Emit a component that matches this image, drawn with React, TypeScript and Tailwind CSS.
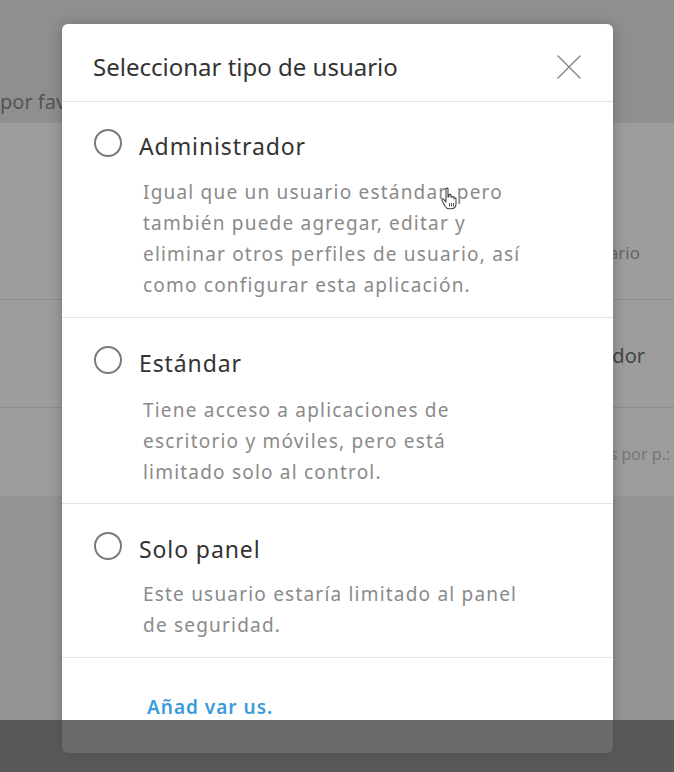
const options = [
  {
    title: "Administrador",
    desc: [
      "Igual que un usuario estándar, pero",
      "también puede agregar, editar y",
      "eliminar otros perfiles de usuario, así",
      "como configurar esta aplicación.",
    ],
    pad: "pt-[27px] pb-[16px]",
    gap: "mt-[20px]",
  },
  {
    title: "Estándar",
    desc: [
      "Tiene acceso a aplicaciones de",
      "escritorio y móviles, pero está",
      "limitado solo al control.",
    ],
    pad: "pt-[28px] pb-[15px]",
    gap: "mt-[21px]",
  },
  {
    title: "Solo panel",
    desc: ["Este usuario estaría limitado al panel", "de seguridad."],
    pad: "pt-[28px] pb-[16px]",
    gap: "mt-[19px]",
  },
];

function Radio() {
  return <span className="block h-[28px] w-[28px] shrink-0 rounded-full border-2 border-[#7a7a7a]" />;
}

function CloseIcon() {
  return (
    <svg width="24" height="24" viewBox="0 0 24 24" fill="none" stroke="#8a8a8a" strokeWidth="1.5" strokeLinecap="round">
      <path d="M1 1l22 22M23 1L1 23" />
    </svg>
  );
}

function HandCursor() {
  return (
    <svg width="22" height="26" viewBox="0 0 22 26" className="absolute left-[440px] top-[186px]">
      <path
        d="M6 3c0-1.2 2-1.2 2 0v8l1-0.2V9c0-1 2-1 2 0v2l1 0.2c0-1 2-1 2 0v1.5c0-1 2-1 2 0v5c0 3-2 5-5 5h-2c-2 0-3-1-4-2.5L2 14.5c-0.7-1 0.7-2.2 1.7-1.2L6 16z"
        fill="#fff"
        stroke="#444"
        strokeWidth="1.1"
        strokeLinejoin="round"
      />
      <path d="M9.5 17v3.5M11.5 17v3.5M13.5 17v3.5" stroke="#555" strokeWidth="1" />
    </svg>
  );
}

export default function App() {
  return (
    <div className="relative h-[772px] w-[674px] overflow-hidden bg-[#959595] font-['Noto_Sans',sans-serif]">
      {/* page behind the dialog */}
      <div className="flex h-[123px] items-end whitespace-nowrap bg-[#8f8f8f] pb-[6px]">
        <span className="text-[20px] text-[#555]">por favor</span>
      </div>
      <div className="flex flex-col bg-[#9d9d9d]">
        <div className="flex h-[177px] items-end justify-end border-b border-[#8c8c8c] pb-[34px] pr-[34px]">
          <span className="text-[17px] text-[#666]">Tipo de usuario</span>
        </div>
        <div className="flex h-[108px] items-center justify-end border-b border-[#8c8c8c] pr-[29px] pt-[4px]">
          <span className="text-[20px] text-[#444]">Administrador</span>
        </div>
        <div className="flex h-[88px] items-start overflow-hidden whitespace-nowrap pl-[563px] pt-[34px]">
          <span className="text-[16px] text-[#777]">Ajustes por p.: 1</span>
        </div>
      </div>

      {/* dialog */}
      <div className="absolute left-[62px] top-[24px] flex h-[729px] w-[551px] flex-col overflow-hidden rounded-[6px] bg-white shadow-[0_2px_14px_rgba(0,0,0,0.25)]">
        <div className="flex h-[78px] shrink-0 items-center justify-between border-b border-[#e3e3e3] pl-[31px] pr-[32px] pt-[8px]">
          <span className="text-[24px] text-[#333]">Seleccionar tipo de usuario</span>
          <CloseIcon />
        </div>
        {options.map((o) => (
          <div key={o.title} className={`border-b border-[#e3e3e3] ${o.pad}`}>
            <div className="flex items-center gap-[17px] pl-[32px]">
              <Radio />
              <span className="translate-y-[3px] text-[23px] leading-[28px] tracking-[0.9px] text-[#333]">{o.title}</span>
            </div>
            <div className={`${o.gap} pl-[81px] text-[19px] leading-[31px] tracking-[1.2px] text-[#8a8a8a]`}>
              {o.desc.map((l) => (
                <div key={l}>{l}</div>
              ))}
            </div>
          </div>
        ))}
        <div className="pl-[85px] pt-[35px]">
          <span className="text-[19px] font-semibold tracking-[1px] text-[#3b9bd8]">Añad var us.</span>
        </div>
      </div>

      <HandCursor />

      {/* bottom bar over everything */}
      <div className="absolute bottom-0 left-0 h-[52px] w-full bg-[rgba(76,76,76,0.83)]" />
    </div>
  );
}
